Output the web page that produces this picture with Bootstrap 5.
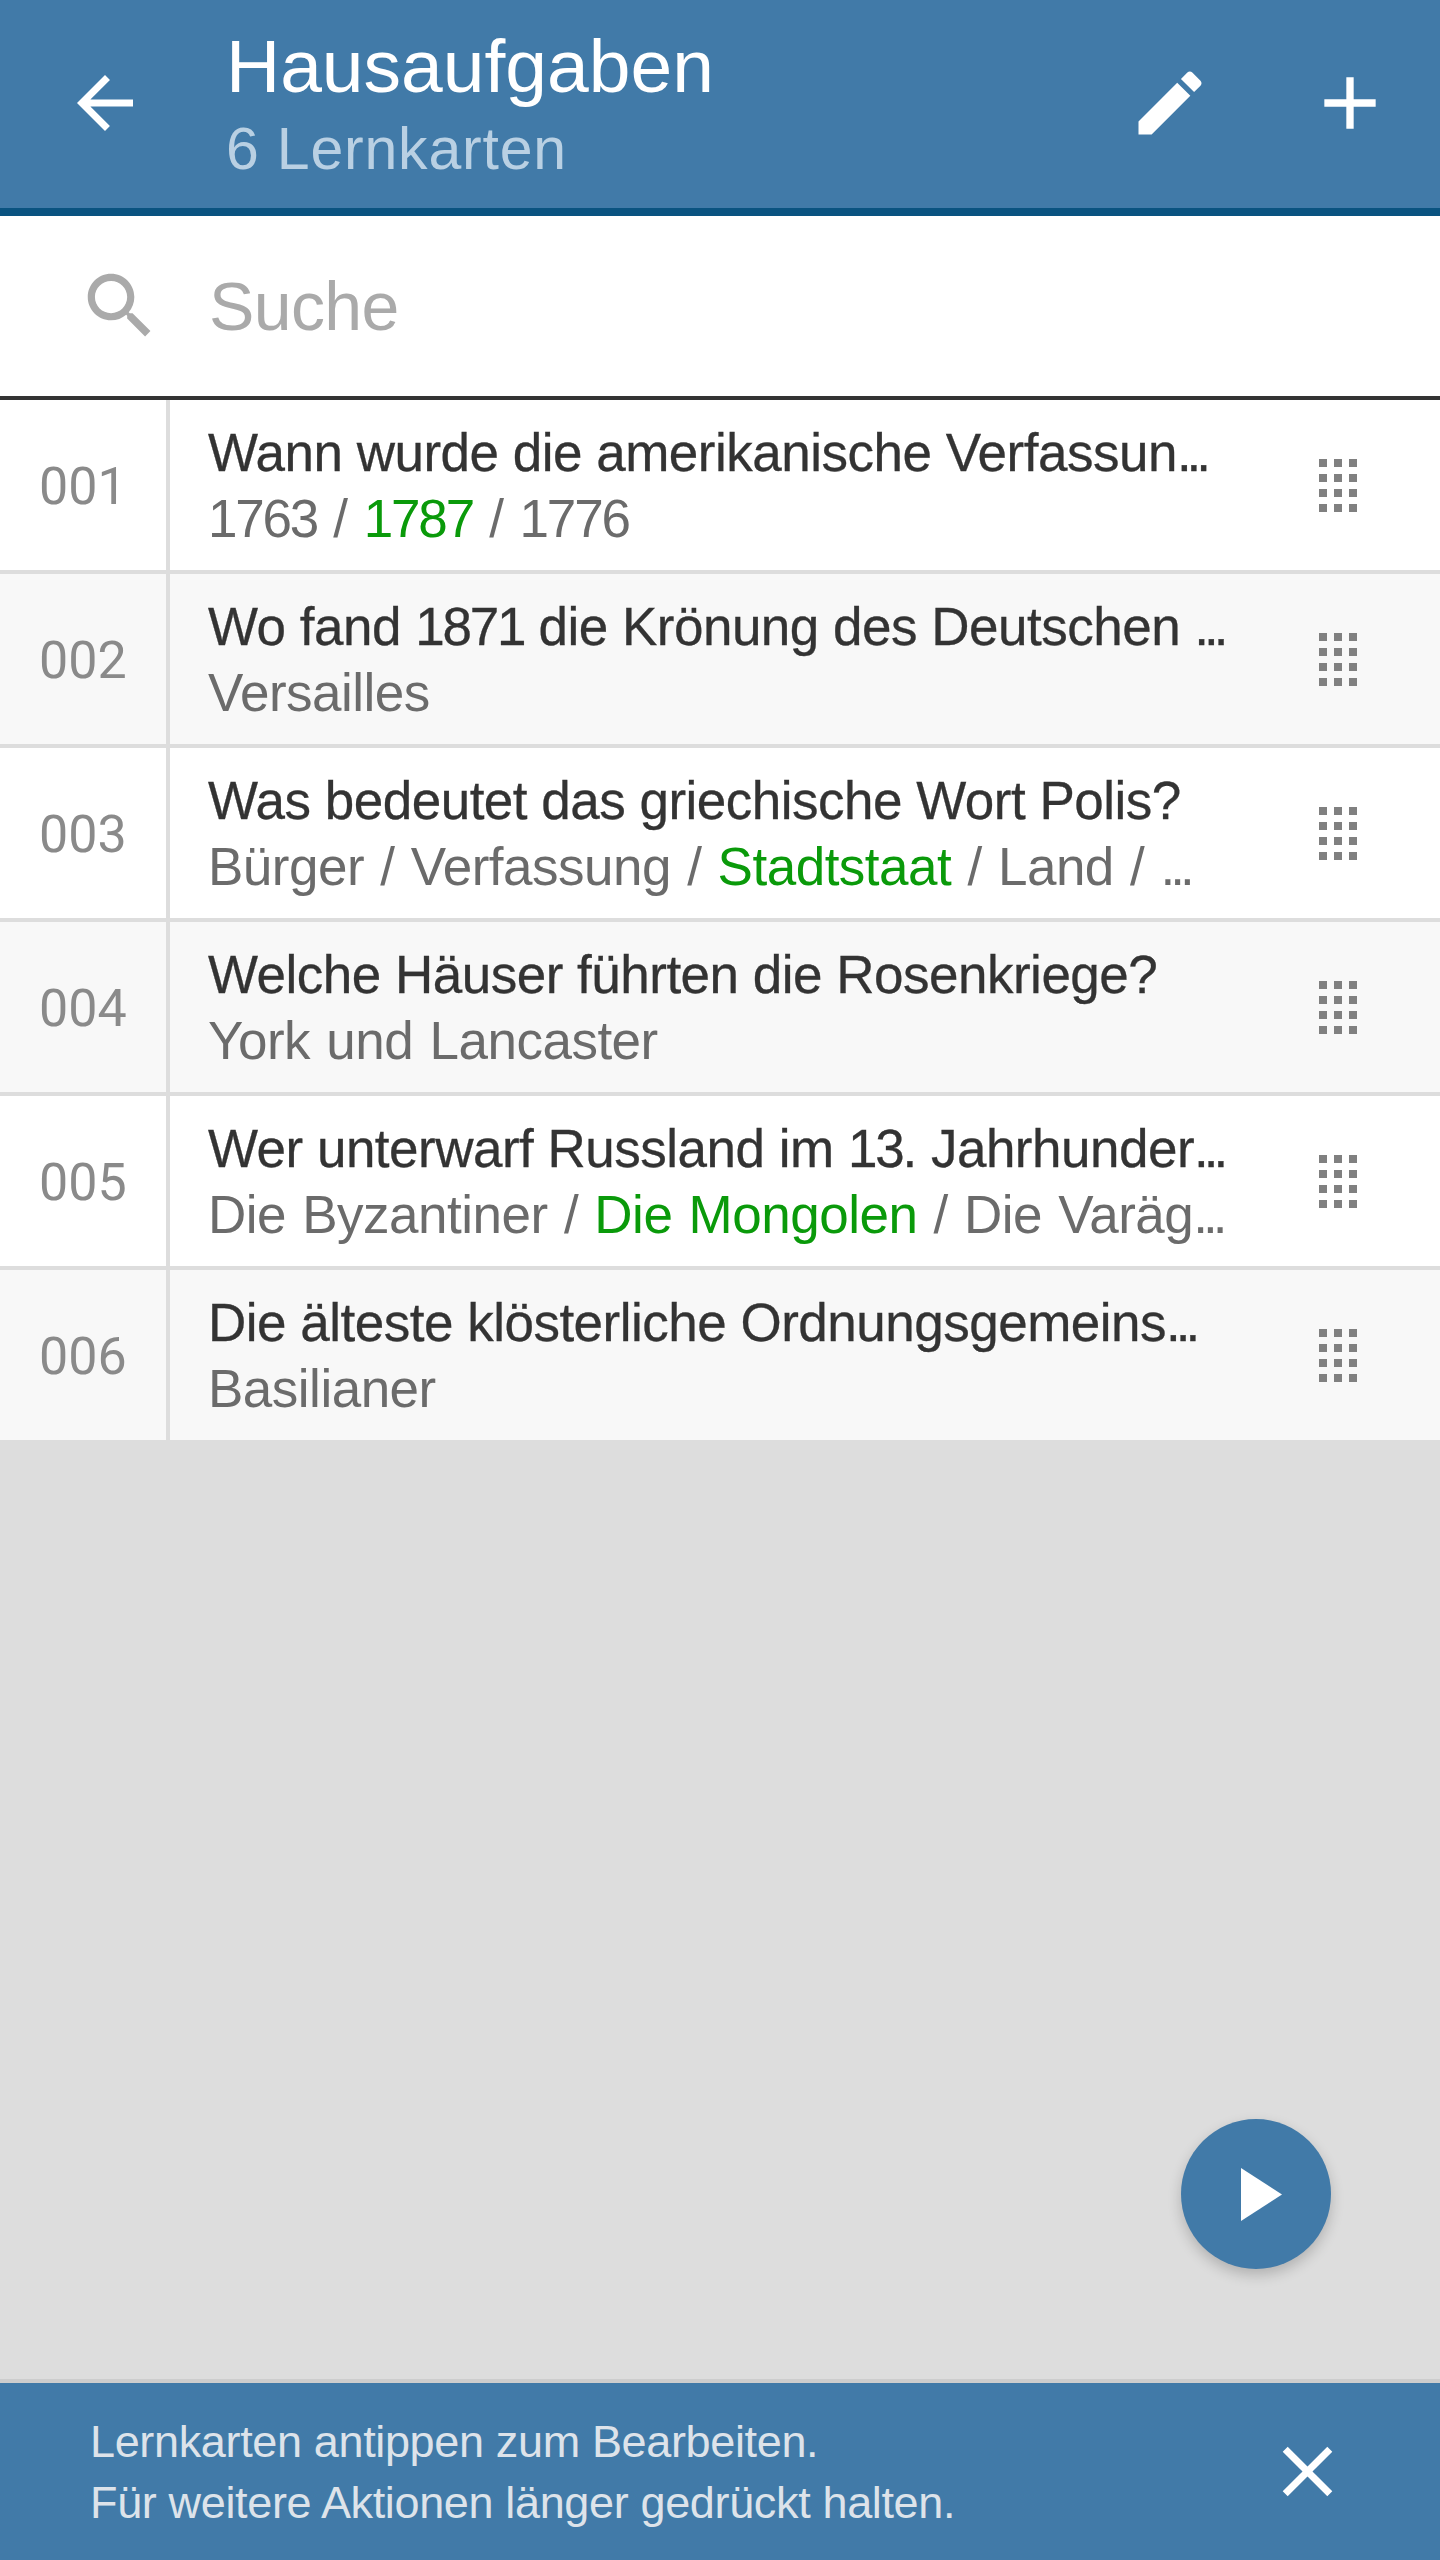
<!DOCTYPE html>
<html>
<head>
    <meta charset="utf-8" />
    <title>Hausaufgaben</title>
    <link href="https://cdn.jsdelivr.net/npm/bootstrap@5.3.2/dist/css/bootstrap.min.css" rel="stylesheet">
    <style>
        body {
            font-family: "Liberation Sans", Arial, sans-serif;
            background-color: #ddd;
        }

        .app-header {
            height: 216px;
            background-color: #417aa8;
            border-bottom: 8px solid #0a5380;
            color: #fff;
        }

        .head-icon {
            width: 84px;
            height: 84px;
            fill: #fff;
            flex-shrink: 0;
            margin-bottom: 2px;
        }

        .back-icon { margin-left: 63px; }
        .head-text { margin-left: 79px; padding-top: 27px; }
        .edit-icon { margin-right: 94px; }
        .add-icon { width: 88px; height: 88px; margin-right: 46px; }

        .head-title {
            font-size: 75px;
            line-height: 78px;
        }

        .head-sub {
            font-size: 59px;
            line-height: 78px;
            letter-spacing: 0.8px;
            margin-top: 5px;
            color: #b9d0e3;
        }

        .search-bar {
            height: 184px;
            background-color: #fff;
            border-bottom: 4px solid #333;
        }

        .search-bar svg {
            width: 86px;
            height: 86px;
            fill: #aaa;
            margin-left: 77px;
            margin-right: 46px;
        }

        .search-hint {
            font-size: 68px;
            letter-spacing: -0.6px;
            color: #aaa;
        }

        .card-row {
            height: 174px;
            background-color: #fff;
            border-bottom: 4px solid #ddd;
        }

        .card-row.alt { background-color: #f8f8f8; }
        .card-row:last-child { height: 170px; border-bottom: 0; }

        .row-num {
            width: 170px;
            border-right: 4px solid #ddd;
            font-family: Roboto, sans-serif;
            font-size: 52px;
            color: #8a8a8a;
            padding-left: 39px;
            padding-top: 3px;
        }

        .row-text {
            margin-left: 38px;
            width: 1050px;
            white-space: nowrap;
            overflow: hidden;
        }

        .row-title {
            font-size: 53px;
            line-height: 67px;
            color: #333;
            letter-spacing: -0.5px;
            -webkit-text-stroke: 0.3px #333;
        }

        .row-sub {
            font-size: 53px;
            line-height: 67px;
            margin-top: -1px;
            color: #6b6b6b;
            letter-spacing: -0.5px;
            word-spacing: 2px;
        }

        .row-sub b {
            font-weight: 400;
            color: #0a9a0a;
        }

        .ell { letter-spacing: -5px; }
        .tight { letter-spacing: -2.2px; }

        .dots {
            width: 38px;
            height: 53px;
            fill: #808080;
            margin-left: 61px;
        }

        .fab {
            position: absolute;
            right: 109px;
            bottom: 110px;
            width: 150px;
            height: 150px;
            border-radius: 50%;
            background-color: #417aa8;
            box-shadow: 0 6px 14px rgba(0,0,0,0.2);
        }

        .fab svg {
            width: 41px;
            height: 53px;
            fill: #fff;
            margin-left: 10px;
        }

        .hint-bar {
            height: 181px;
            background-color: #417aa8;
            border-top: 4px solid #cdcdcd;
            color: #dde3ea;
            padding-left: 90px;
        }

        .hint-text {
            font-size: 45px;
            line-height: 61px;
            letter-spacing: -0.35px;
        }

        .hint-bar svg {
            width: 85px;
            height: 85px;
            fill: #fff;
            margin-right: 90px;
        }
    </style>
</head>
<body>
    <div class="d-flex flex-column vh-100">
        <header class="app-header d-flex align-items-center">
            <svg class="head-icon back-icon" viewBox="0 0 24 24"><path d="M20 11H7.83l5.59-5.59L12 4l-8 8 8 8 1.41-1.41L7.83 13H20v-2z"/></svg>
            <div class="head-text flex-grow-1 align-self-start">
                <div class="head-title">Hausaufgaben</div>
                <div class="head-sub">6 Lernkarten</div>
            </div>
            <svg class="head-icon edit-icon" viewBox="0 0 24 24"><path d="M3 17.25V21h3.75L17.81 9.94l-3.75-3.75L3 17.25zM20.71 7.04c.39-.39.39-1.02 0-1.41l-2.34-2.34c-.39-.39-1.02-.39-1.41 0l-1.83 1.83 3.75 3.75 1.83-1.83z"/></svg>
            <svg class="head-icon add-icon" viewBox="0 0 24 24"><path d="M19 13h-6v6h-2v-6H5v-2h6V5h2v6h6v2z"/></svg>
        </header>

        <div class="search-bar d-flex align-items-center">
            <svg viewBox="0 0 24 24"><path d="M15.5 14h-.79l-.28-.27C15.41 12.59 16 11.11 16 9.5 16 5.91 13.09 3 9.5 3S3 5.91 3 9.5 5.91 16 9.5 16c1.61 0 3.09-.59 4.23-1.57l.27.28v.79l5 4.99L20.49 19l-4.99-5zm-6 0C7.01 14 5 11.99 5 9.5S7.01 5 9.5 5 14 7.01 14 9.5 11.99 14 9.5 14z"/></svg>
            <span class="search-hint">Suche</span>
        </div>

        <main class="flex-grow-1 position-relative">
            <div id="cardList"></div>
            <a class="fab d-flex align-items-center justify-content-center" href="#">
                <svg viewBox="0 0 41 53"><path d="M0 0L41 26.5L0 53z"/></svg>
            </a>
        </main>

        <footer class="hint-bar d-flex align-items-center justify-content-between">
            <div class="hint-text">Lernkarten antippen zum Bearbeiten.<br>Für weitere Aktionen länger gedrückt halten.</div>
            <svg viewBox="0 0 24 24"><path d="M19 6.41L17.59 5 12 10.59 6.41 5 5 6.41 10.59 12 5 17.59 6.41 19 12 13.41 17.59 19 19 17.59 13.41 12z"/></svg>
        </footer>
    </div>

    <script>
        const ell = '<span class="ell">...</span>';
        const cards = [
            ["Wann wurde die amerikanische Verfassun" + ell, '<span class="tight">1763</span> / <b class="tight">1787</b> / <span class="tight">1776</span>'],
            ['Wo fand <span class="tight">1871</span> die Krönung des Deutschen ' + ell, "Versailles"],
            ["Was bedeutet das griechische Wort Polis?", "Bürger / Verfassung / <b>Stadtstaat</b> / Land / " + ell],
            ["Welche Häuser führten die Rosenkriege?", "York und Lancaster"],
            ['Wer unterwarf Russland im <span class="tight">13</span>. Jahrhunder' + ell, "Die Byzantiner / <b>Die Mongolen</b> / Die Varäg" + ell],
            ["Die älteste klösterliche Ordnungsgemeins" + ell, "Basilianer"]
        ];

        let dots = "";
        for (let y = 0; y < 4; y++) {
            for (let x = 0; x < 3; x++) {
                dots += `<rect x="${x * 15}" y="${y * 15}" width="8" height="8"/>`;
            }
        }

        const list = document.getElementById("cardList");
        cards.forEach((c, i) => {
            const row = document.createElement("div");
            row.className = "card-row d-flex" + (i % 2 ? " alt" : "");
            row.innerHTML = `
                <div class="row-num d-flex align-items-center">00${i + 1}</div>
                <div class="row-text align-self-center">
                    <div class="row-title">${c[0]}</div>
                    <div class="row-sub">${c[1]}</div>
                </div>
                <svg class="dots align-self-center" viewBox="0 0 38 53">${dots}</svg>`;
            list.appendChild(row);
        });
    </script>
    <script src="https://cdn.jsdelivr.net/npm/bootstrap@5.3.2/dist/js/bootstrap.bundle.min.js"></script>
</body>
</html>
